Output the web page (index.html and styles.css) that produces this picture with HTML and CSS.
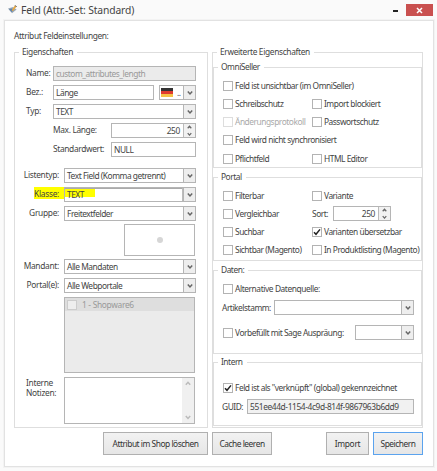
FILE: index.html
```html
<!DOCTYPE html>
<html lang="de">
<head>
<meta charset="utf-8">
<title>Feld (Attr.-Set: Standard)</title>
<link rel="stylesheet" href="styles.css">
</head>
<body>
<svg width="0" height="0" class="defs">
  <symbol id="down" viewBox="0 0 8 8"><path d="M1.8 2.6 4 5 6.2 2.6" fill="none" stroke="currentColor" stroke-width="1.5"/></symbol>
  <symbol id="up" viewBox="0 0 8 8"><path d="M1.8 5.2 4 2.8 6.2 5.2" fill="none" stroke="currentColor" stroke-width="1.5"/></symbol>
  <symbol id="tick" viewBox="0 0 8 8"><path d="M1 4.2 3 6.3 7 1.4" fill="none" stroke="#222" stroke-width="1.5"/></symbol>
</svg>
<header class="titlebar">
  <svg class="appicon" width="9" height="9" viewBox="0 0 9 9"><path d="M0 3.4 5 2l3.6 2.4L4 8.2z" fill="#9aa9b8"/><path d="M1 4.2 4 3.4l1.4 2L3.6 7z" fill="#5f84ad"/><path d="M3.6 5.4 6.6.8 8.4 1.8 5 6z" fill="#e8a840"/><path d="M6.8.5 8.7 1.6" stroke="#655b50"/></svg>
  <h1>Feld (Attr.-Set: Standard)</h1>
  <span class="minimize"></span>
  <span class="close"><svg width="7" height="7" viewBox="0 0 7 7"><path d="M1 1l5 5M6 1 1 6" stroke="#fff" stroke-width="1.5"/></svg></span>
</header>
<main class="frame">
  <p class="intro">Attribut Feldeinstellungen:</p>
  <div class="columns">
    <section class="group props">
      <h2>Eigenschaften</h2>
      <div class="row short"><label>Name:</label><div class="field off">custom_attributes_length</div></div>
      <div class="row short"><label>Bez.:</label><div class="field">Länge</div><div class="field flagbox"><svg width="12" height="9" viewBox="0 0 12 9"><path fill="#333" d="M0 0h12v3H0z"/><path fill="#df3b2d" d="M0 3h12v3H0z"/><path fill="#f5c246" d="M0 6h12v3H0z"/></svg><i>..</i><b class="drop"><svg><use href="#down"/></svg></b></div></div>
      <div class="row short"><label>Typ:</label><div class="field">TEXT<b class="drop"><svg><use href="#down"/></svg></b></div></div>
      <div class="row mid"><label>Max. Länge:</label><div class="field num">250<b class="spin"><svg><use href="#up"/></svg><svg><use href="#down"/></svg></b></div></div>
      <div class="row mid last"><label>Standardwert:</label><div class="field">NULL</div></div>
      <div class="row long"><label>Listentyp:</label><div class="field">Text Field (Komma getrennt)<b class="drop"><svg><use href="#down"/></svg></b></div></div>
      <div class="row long marked"><label>Klasse:</label><div class="field focus">TEXT<b class="drop"><svg><use href="#down"/></svg></b></div></div>
      <div class="row long"><label>Gruppe:</label><div class="field">Freitextfelder<b class="drop"><svg><use href="#down"/></svg></b></div></div>
      <div class="preview"><span></span></div>
      <div class="row long"><label>Mandant:</label><div class="field">Alle Mandaten<b class="drop"><svg><use href="#down"/></svg></b></div></div>
      <div class="row long"><label>Portal(e):</label><div class="field">Alle Webportale<b class="drop"><svg><use href="#down"/></svg></b></div></div>
      <div class="list"><div class="item"><span class="box"></span>1 - Shopware6</div></div>
      <div class="notes"><label>Interne<br>Notizen:</label><div class="area"><div class="scroll"><svg><use href="#up"/></svg><svg><use href="#down"/></svg></div></div></div>
    </section>
    <section class="group extended">
      <h2>Erweiterte Eigenschaften</h2>
      <section class="group omni">
        <h2>OmniSeller</h2>
        <div class="checks">
          <label class="wide"><span class="box"></span>Feld ist unsichtbar (im OmniSeller)</label>
          <label><span class="box"></span>Schreibschutz</label><label><span class="box"></span>Import blockiert</label>
          <label class="dim"><span class="box"></span>Änderungsprotokoll</label><label><span class="box"></span>Passwortschutz</label>
          <label class="wide"><span class="box"></span>Feld wird nicht synchronisiert</label>
          <label><span class="box"></span>Pflichtfeld</label><label><span class="box"></span>HTML Editor</label>
        </div>
      </section>
      <section class="group portal">
        <h2>Portal</h2>
        <div class="checks">
          <label><span class="box"></span>Filterbar</label><label><span class="box"></span>Variante</label>
          <label><span class="box"></span>Vergleichbar</label><div class="sort">Sort:<div class="field num">250<b class="spin"><svg><use href="#up"/></svg><svg><use href="#down"/></svg></b></div></div>
          <label><span class="box"></span>Suchbar</label><label><span class="box"><svg><use href="#tick"/></svg></span>Varianten übersetzbar</label>
          <label><span class="box"></span>Sichtbar (Magento)</label><label><span class="box"></span>In Produktlisting (Magento)</label>
        </div>
      </section>
      <section class="group data">
        <h2>Daten:</h2>
        <label class="check"><span class="box"></span>Alternative Datenquelle:</label>
        <div class="line"><label>Artikelstamm:</label><div class="field"><b class="drop"><svg><use href="#down"/></svg></b></div></div>
        <div class="line sage"><label class="check"><span class="box"></span>Vorbefüllt mit Sage Auspräung:</label><div class="field"><b class="drop"><svg><use href="#down"/></svg></b></div></div>
      </section>
      <section class="group intern">
        <h2>Intern</h2>
        <label class="check"><span class="box"><svg><use href="#tick"/></svg></span>Feld ist als "verknüpft" (global) gekennzeichnet</label>
        <div class="line"><label>GUID:</label><div class="field guid">551ee44d-1154-4c9d-814f-9867963b6dd9</div></div>
      </section>
    </section>
  </div>
  <footer class="actions">
    <button class="delete">Attribut im Shop löschen</button>
    <button class="cache">Cache leeren</button>
    <button class="import">Import</button>
    <button class="save">Speichern</button>
  </footer>
</main>
</body>
</html>
```
FILE: styles.css
```css
* { box-sizing: border-box; }
body {
  margin: 0; width: 437px; height: 471px; overflow: hidden;
  background: #fafafa; color: #444;
  font: 8.4px/10px "Noto Sans", "Open Sans", sans-serif;
  letter-spacing: -.47px; white-space: nowrap;
}
h1, h2, p { margin: 0; font-weight: normal; }
svg { flex: none; }
.defs { position: absolute; }
.titlebar { height: 20px; display: flex; padding-left: 8px; }
.appicon { margin-top: 5px; }
h1 { flex: none; font-size: 10.3px; line-height: 20px; margin-left: 4px; width: 372px; letter-spacing: -.12px; }
.titlebar .minimize { width: 5px; height: 2px; background: #222; margin-top: 10px; margin-right: 8px; flex: none; }
.close { width: 27px; height: 12px; margin-top: 4px; background: #c9504f; display: flex; align-items: center; justify-content: center; flex: none; }
.frame { margin: 0 3px 0 4px; height: 447px; border: 1px solid #e2e2e2; outline: 1px solid #f3f3f3; background: #fff; padding: 9px 9px 0; }
.intro { line-height: 11px; height: 22px; letter-spacing: -.38px; }
.columns { display: flex; gap: 4px; height: 376px; }
.group { border: 1px solid #dedede; }
.group > h2 { font-size: inherit; line-height: 10px; height: 10px; width: max-content; background: #fff; padding: 0 4px 0 3px; margin: -6px 0 0 4px; }
.props { width: 194px; }
.props > h2, .extended > h2 { letter-spacing: -.35px; }
.extended { width: 211px; }
.row { display: flex; height: 15px; margin: 0 11px 4px 0; line-height: 14px; }
.row > label { flex: none; padding-right: 5px; text-align: right; }
.props > h2 { margin-bottom: 9px; }
.row.short > label { width: 38px; padding-left: 11px; text-align: left; letter-spacing: -.3px; }
.row.mid > label { width: 96px; padding-left: 38px; text-align: left; letter-spacing: -.35px; }
.row.mid.last { margin-bottom: 11px; }
.row.long > label { width: 49px; letter-spacing: -.3px; }
.field { flex: 1; display: flex; min-width: 0; height: 15px; border: 1px solid #b5b5b5; background: #fff; line-height: 13px; padding-left: 2px; }
.off { background: #ebebeb; color: #999; }
.flagbox { flex: 0 0 37px; margin-left: 5px; padding-left: 1px; }
.flagbox > svg { margin-top: 2px; }
.flagbox i { font-style: normal; margin-left: 4px; }
.drop { margin-left: auto; width: 12px; flex: none; border-left: 1px solid #b5b5b5; background: #eee; display: flex; align-items: center; justify-content: center; color: #666; }
.drop svg { width: 8px; height: 8px; }
.num { justify-content: flex-end; letter-spacing: -.35px; }
.spin { margin-left: 3px; width: 12px; flex: none; border-left: 1px solid #bbb; background: #f1f1f1; display: flex; flex-direction: column; align-items: center; color: #666; }
.spin svg { width: 7px; height: 6.5px; }
.marked { background: linear-gradient(#ff0, #ff0) 19px 0 / 62px 12px no-repeat; }
.marked .field { background: linear-gradient(#ff0, #ff0) 0 0 / 30px 9px no-repeat #fff; }
.focus { box-shadow: inset 0 1px #aaa; }
.focus .drop { box-shadow: -1px 0 #bbb; }
.preview { width: 71px; height: 32px; margin: -1px 0 3px 109px; border: 1px solid #b5b5b5; display: flex; align-items: center; justify-content: center; }
.preview span { width: 6px; height: 6px; border-radius: 50%; background: #d6d6d6; }
.list { width: 131px; height: 76px; margin-left: 49px; border: 1px solid #b5b5b5; background: #ebebeb; }
.item { height: 13px; background: #dedede; color: #999; display: flex; align-items: center; padding-left: 2px; letter-spacing: -.3px; }
.item .box { border-color: #ccc; background: #eee; margin-right: 5px; }
.notes { display: flex; margin-top: 4px; }
.notes label { width: 49px; padding: 1px 0 0 11px; line-height: 9.5px; letter-spacing: -.3px; }
.area { width: 131px; height: 47px; border: 1px solid #b5b5b5; display: flex; }
.scroll { margin-left: auto; width: 12px; background: #f0f0f0; color: #bbb; display: flex; flex-direction: column; justify-content: space-between; align-items: center; padding: 1px 0; }
.scroll svg { width: 8px; height: 9px; }
.extended > .group { margin: 0 0 9px; }
.extended > h2 { margin-bottom: 10px; }
.omni { height: 101px; }
.portal { height: 84px; }
.extended > .data { height: 84px; margin-bottom: 8px; }
.extended > .intern { height: 64px; margin-bottom: 0; }
.box { width: 10px; height: 10px; border: 1px solid #b3b3b3; background: #fff; margin-right: 2px; flex: none; display: flex; }
.box svg { width: 8px; height: 8px; }
.checks { display: grid; grid-template-columns: 89px 1fr; grid-auto-rows: 18.15px; margin: 5px 0 0 9px; }
.checks label, .check { display: flex; align-items: center; }
.wide { grid-column: span 2; }
.dim { color: #aaa; }
.dim .box { border-color: #ddd; }
.sort { display: flex; line-height: 15px; padding-top: 1px; }
.sort .field { flex: 0 0 58px; margin-left: 5px; }
.data > .check { margin: 9px 0 6px 9px; height: 10px; letter-spacing: -.42px; }
.line { display: flex; line-height: 15px; padding: 0 7px 0 8px; }
.line > label { width: 52px; }
.line.sage { margin-top: 10px; padding-left: 9px; }
.line.sage > label { width: 132px; }
.intern > .check { margin: 16px 0 6px 9px; height: 10px; }
.intern .line > label { width: 25px; }
.guid { background: #f1f1f1; letter-spacing: -.4px; }
.actions { display: flex; height: 24px; margin: 4px 0 0 89px; }
button { font: inherit; letter-spacing: inherit; color: #333; padding: 0; border: 1px solid #b0b0b0; background: linear-gradient(#f2f2f2, #e6e6e6); height: 23px; }
.delete { width: 105px; }
.cache { width: 60px; margin-left: 4px; }
.import { width: 43px; margin-left: 54px; letter-spacing: -.3px; }
.save { width: 50px; margin-left: 4px; border-color: #5ba3ee; }
```
